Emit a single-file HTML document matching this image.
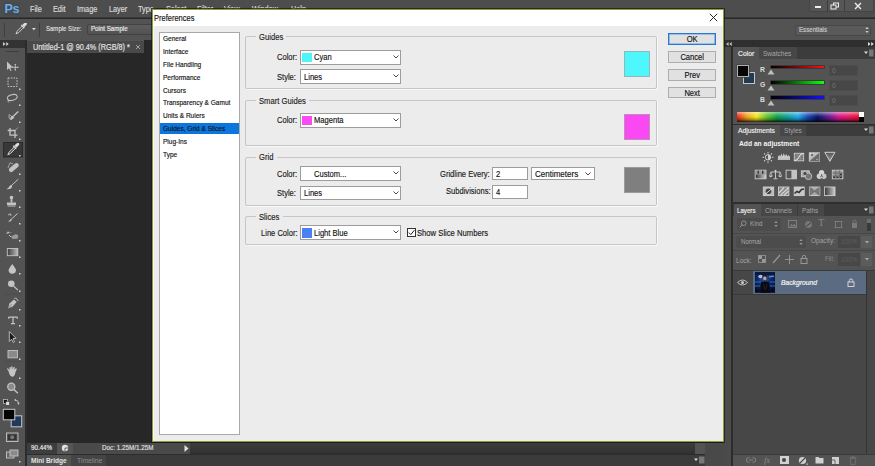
<!DOCTYPE html>
<html><head><meta charset="utf-8">
<style>
*{margin:0;padding:0;box-sizing:border-box}
html,body{width:875px;height:466px;overflow:hidden;background:#272727;font-family:"Liberation Sans",sans-serif;position:relative}
.a{position:absolute}
.t{position:absolute;white-space:nowrap;line-height:1}
.dlg .t{-webkit-text-stroke:0.15px currentColor}

.li{left:163px;font-size:6.7px;letter-spacing:-0.25px;color:#222}
.grp{position:absolute;left:245px;width:412px;border:1px solid #c4c4c4;border-radius:1px}
.gl{left:255px;background:#ececec;padding-left:3px;font-size:8px;letter-spacing:-0.15px;color:#222}
.lab{font-size:8px;letter-spacing:-0.2px;color:#222}
.dd{position:absolute;left:300px;width:101px;height:14px;background:#fff;border:1px solid #a5a5a5}
.fld{position:absolute;background:#fff;border:1px solid #a5a5a5}
.sw{position:absolute;left:1.5px;top:2px;width:10px;height:9px}
.ddt{position:absolute;top:2.5px;font-size:8px;letter-spacing:-0.2px;color:#111;white-space:nowrap;line-height:1}
.chev{position:absolute;left:90px;top:3px;width:5px;height:5px;border-right:1px solid #444;border-bottom:1px solid #444;transform:rotate(45deg) scale(0.8)}
.btn{position:absolute;left:668px;width:48px;height:12px;background:#e1e1e1;border:1px solid #adadad;font-size:8px;letter-spacing:-0.1px;color:#111;text-align:center;line-height:10px}

.mn{-webkit-text-stroke:0.15px currentColor;top:4.6px;font-size:8.4px;transform:scaleX(0.87);transform-origin:0 0;color:#dedede}
.ch{font-size:6.5px}
</style></head><body>
<!-- menu bar -->
<div class="a" style="left:0;top:0;width:875px;height:18px;background:#4d4d4d;border-bottom:1px solid #3a3a3a"></div>
<div class="a" style="left:3.5px;top:2px;width:16px;height:13.5px;background:#474a4e;border-radius:1px"></div><div class="t" style="left:4.5px;top:3px;font-size:12.5px;font-weight:bold;color:#6aace6;letter-spacing:-0.3px">Ps</div>
<div class="t mn" style="left:30px">File</div>
<div class="t mn" style="left:53px">Edit</div>
<div class="t mn" style="left:77px">Image</div>
<div class="t mn" style="left:109px">Layer</div>
<div class="t mn" style="left:138px">Type</div>
<div class="t mn" style="left:165.5px">Select</div>
<div class="t mn" style="left:196.5px">Filter</div>
<div class="t mn" style="left:224px">View</div>
<div class="t mn" style="left:251.5px">Window</div>
<div class="t mn" style="left:291px">Help</div>
<!-- window buttons -->
<div class="a" style="left:809px;top:0;width:65px;height:11.5px;background:#565656;border:1px solid #444;border-top:none"></div>
<div class="a" style="left:826.5px;top:0;width:1px;height:11px;background:#3e3e3e"></div>
<div class="a" style="left:843.5px;top:0;width:1px;height:11px;background:#3e3e3e"></div>
<div class="a" style="left:814.5px;top:6px;width:6px;height:2px;background:#eee"></div>
<svg class="a" style="left:830px;top:2px" width="10" height="8"><rect x="3.5" y="1" width="5" height="4" fill="none" stroke="#eee" stroke-width="1"/><rect x="1" y="3" width="5" height="4" fill="#565656" stroke="#eee" stroke-width="1"/></svg>
<svg class="a" style="left:854px;top:2px" width="8" height="8"><path d="M1 1 L7 7 M7 1 L1 7" stroke="#eee" stroke-width="1.4"/></svg>
<!-- options bar -->
<div class="a" style="left:0;top:19px;width:875px;height:21px;background:#535353"></div>
<div class="a" style="left:3.5px;top:23px;width:1px;height:14px;background:#3e3e3e"></div>
<div class="a" style="left:38.8px;top:22.7px;width:1px;height:14px;background:#3e3e3e"></div>
<svg class="a" style="left:15px;top:23px" width="12" height="12"><path d="M1 10.8 L2.2 8.2 L7.2 3.2 L8.6 4.6 L3.6 9.6 Z" fill="#4a4a4a" stroke="#e0e0e0" stroke-width="0.9"/><path d="M7.4 1.8 L9.6 -0.2 Q10.9 -0.9 11.6 -0.1 Q12.3 0.7 11.4 2 L9.3 4.1 Z" fill="#e0e0e0"/><path d="M6.3 2 L9.3 5" stroke="#e0e0e0" stroke-width="1.3"/></svg>
<svg class="a" style="left:31.6px;top:28.2px" width="4" height="3"><path d="M0 0 L3.8 0 L1.9 2.2 Z" fill="#ddd"/></svg>
<div class="t" style="left:45.8px;top:24.72px;font-size:7.3px;font-weight:normal;font-style:normal;color:#dedede;transform:scaleX(0.826);transform-origin:0 0;-webkit-text-stroke:0.2px currentColor">Sample Size:</div>
<div class="a" style="left:87px;top:23.5px;width:80px;height:11.5px;background:linear-gradient(#5d5d5d,#525252);border:1px solid #424242;border-radius:2px"></div>
<div class="t" style="left:91.4px;top:24.82px;font-size:7.3px;font-weight:normal;font-style:normal;color:#e8e8e8;transform:scaleX(0.843);transform-origin:0 0;-webkit-text-stroke:0.2px currentColor">Point Sample</div>
<div class="a" style="left:795px;top:24.5px;width:76px;height:11px;background:#5a5a5a;border:1px solid #474747;border-radius:2px"></div>
<div class="t" style="left:799px;top:25.82px;font-size:7.3px;font-weight:normal;font-style:normal;color:#c6c6c6;transform:scaleX(0.842);transform-origin:0 0;-webkit-text-stroke:0.2px currentColor">Essentials</div>
<svg class="a" style="left:865px;top:26px" width="4" height="8"><path d="M0.3 3 L2 1 L3.7 3 Z M0.3 5 L2 7 L3.7 5 Z" fill="#ccc"/></svg>
<!-- tools panel -->
<div class="a" style="left:0;top:40px;width:25px;height:426px;background:#535353"></div>
<div class="a" style="left:0;top:40px;width:25px;height:7.5px;background:#333"></div>
<svg class="a" style="left:3px;top:42px" width="7" height="4"><path d="M0 0 L2.6 2 L0 4 Z M3.2 0 L5.8 2 L3.2 4 Z" fill="#ccc"/></svg>
<div class="a" style="left:6px;top:50.5px;width:13px;height:1.5px;background:#3e3e3e"></div>
<div class="a" style="left:25px;top:40px;width:2px;height:426px;background:#2c2c2c"></div>
<!-- tool icons -->
<svg class="a" style="left:0;top:48px" width="25" height="418">
<g transform="translate(0,-48)">
<!-- move -->
<path d="M7 61.5 L7 70 L9 68.3 L10.5 71 L11.5 70.5 L10.3 67.8 L13 67.5 Z" fill="#c4c4c4"/>
<path d="M15.3 64.3 V70.3 M12.3 67.3 H18.3" stroke="#c4c4c4" stroke-width="0.9"/><path d="M15.3 63.8 L14.3 65 H16.3 Z M15.3 70.8 L14.3 69.6 H16.3 Z M11.8 67.3 L13 66.3 V68.3 Z M18.8 67.3 L17.6 66.3 V68.3 Z" fill="#c4c4c4"/>
<!-- marquee -->
<rect x="8" y="78" width="9" height="8.5" fill="none" stroke="#c4c4c4" stroke-width="1" stroke-dasharray="1.6 1.2"/>
<!-- lasso -->
<ellipse cx="12.3" cy="97.5" rx="5" ry="2.8" fill="none" stroke="#c4c4c4" stroke-width="1" transform="rotate(-15 12.3 97.5)"/>
<path d="M8.5 99.5 Q7.5 102 9 102.5" fill="none" stroke="#c4c4c4" stroke-width="0.9"/>
<!-- quick select -->
<path d="M9 114.5 Q8 119 11 120 L13 117.5 Z" fill="none" stroke="#c4c4c4" stroke-width="0.7"/>
<path d="M10 119.5 Q13 120 14.5 117 L12.3 115.5 Q10 117 10 119.5 Z" fill="#c4c4c4"/>
<path d="M13.5 116 L18.3 111.5" stroke="#c4c4c4" stroke-width="1.4"/>
<!-- crop -->
<path d="M10 128 V135.2 H17.5 M7.7 130.5 H15 V138" fill="none" stroke="#c4c4c4" stroke-width="1.3"/>
<path d="M15 130.5 L18 127.5" stroke="#c4c4c4" stroke-width="0.7"/>
<!-- selected eyedropper box -->
<rect x="3.5" y="142.5" width="19" height="14.5" fill="#383838" stroke="#2a2a2a" stroke-width="1"/>
<path d="M7.8 154.8 L9 152.2 L14.2 147 L15.6 148.4 L10.4 153.6 Z" fill="#5a5a5a" stroke="#dcdcdc" stroke-width="0.9"/>
<path d="M14.3 145.6 L16.8 143.2 Q18.2 142.3 19 143.2 Q19.7 144 18.8 145.3 L16.4 147.7 Z" fill="#dcdcdc"/>
<path d="M13.2 145.8 L16.2 148.8" stroke="#dcdcdc" stroke-width="1.3"/>
<!-- healing -->
<rect x="8" y="165.5" width="11.5" height="4.5" rx="2.2" fill="#c4c4c4" transform="rotate(-40 13.5 167.5)"/>
<path d="M8 168 L10 162.8 L13 164" fill="none" stroke="#c4c4c4" stroke-width="0.7"/>
<!-- brush -->
<path d="M12 185 L18.3 179.2" stroke="#c4c4c4" stroke-width="1"/>
<path d="M6.3 189.3 Q9 189.5 11 188.5 Q12.5 187 12 185 Q10.5 184.5 9.5 186.3 Q8.5 188.5 6.3 189.3 Z" fill="#c4c4c4"/>
<!-- stamp -->
<circle cx="11.5" cy="197.5" r="1.8" fill="#c4c4c4"/>
<rect x="10.6" y="198.5" width="1.8" height="4" fill="#c4c4c4"/>
<rect x="7" y="202.5" width="9" height="2.5" fill="#c4c4c4"/>
<rect x="7.5" y="205.5" width="8" height="1" fill="#c4c4c4"/>
<!-- history brush -->
<path d="M10.5 220 L17.5 213.5" stroke="#c4c4c4" stroke-width="1"/>
<path d="M8 222 L11.5 221 L11 218.7 Z" fill="#c4c4c4"/>
<path d="M8 215 L10.5 213.8 L11 216" fill="none" stroke="#c4c4c4" stroke-width="0.9"/>
<!-- eraser -->
<path d="M6 234 L8 231.2 L10 233.2 L12.3 232 Z" fill="#c4c4c4"/>
<path d="M11 236.5 L16 234 L18.5 235.8 L17.5 238.8 L12.5 239 Z" fill="#9a9a9a"/>
<path d="M9 235 L11 237" stroke="#c4c4c4" stroke-width="1"/>
<!-- gradient -->
<defs><linearGradient id="gr" x1="0" x2="1"><stop offset="0" stop-color="#3a3a3a"/><stop offset="1" stop-color="#bdbdbd"/></linearGradient></defs>
<rect x="7.3" y="248.5" width="10.5" height="7.2" fill="url(#gr)" stroke="#c4c4c4" stroke-width="0.9"/>
<!-- blur drop -->
<path d="M12.3 264 Q8.5 269 8.6 270 A3.7 3.7 0 0 0 16 270 Q16 269 12.3 264 Z" fill="#c4c4c4"/>
<!-- dodge -->
<circle cx="11.3" cy="283.7" r="3.3" fill="#c4c4c4"/>
<path d="M13.5 286 L17.8 290" stroke="#c4c4c4" stroke-width="1.1"/>
<path d="M4 294.3 H22" stroke="#4a4a4a" stroke-width="0.6"/>
<!-- pen -->
<path d="M8 308.5 L9.5 303.5 L14 299.5 L16.5 302 L12.8 306.5 Z" fill="#c4c4c4"/>
<path d="M14.5 298.8 L15.5 297.8 L18 300.3 L17 301.3" fill="none" stroke="#c4c4c4" stroke-width="1"/>
<path d="M8.3 308.2 L12 304.3" stroke="#555" stroke-width="0.6"/>
<!-- type -->
<path d="M8.5 317.2 H17.5 M13 317.2 V323.6 M11 323.6 H15 M8.7 317 V318.8 M17.3 317 V318.8" stroke="#c4c4c4" stroke-width="1.2" fill="none"/>
<!-- path select -->
<path d="M9.3 331.5 L9.3 341.5 L11.5 339.2 L13.2 342.5 L14.5 341.8 L13 338.6 L16 338.3 Z" fill="#1a1a1a" stroke="#c4c4c4" stroke-width="0.9"/>
<!-- rect shape -->
<rect x="8" y="350.5" width="9.5" height="7.3" fill="#8a8a8a" stroke="#c4c4c4" stroke-width="0.9"/>
<path d="M4 361.5 H22" stroke="#4a4a4a" stroke-width="0.6"/>
<!-- hand -->
<path d="M8.5 371 L7 369 Q7.2 368 8.2 368.5 L9.5 370.2 L9.5 367.3 Q10 366.5 10.7 367.3 L11 369.5 L11.2 366.5 Q11.9 365.8 12.5 366.5 L12.7 369.5 L13.5 367 Q14.2 366.4 14.7 367.1 L14.5 370 L15.7 368.3 Q16.6 368 16.8 368.9 L15.4 372.5 Q14.8 376.5 12.3 376.8 Q9.6 376.6 8.5 371 Z" fill="#c4c4c4"/>
<!-- zoom -->
<circle cx="11.3" cy="386.8" r="3.6" fill="#8a8a8a" stroke="#c4c4c4" stroke-width="1.2"/>
<path d="M14 389.5 L17.8 393.3" stroke="#c4c4c4" stroke-width="1.4"/>
<!-- default colors -->
<rect x="3.5" y="399.5" width="4" height="4" fill="#111" stroke="#ccc" stroke-width="0.7"/>
<rect x="5.8" y="401.5" width="3.8" height="3.8" fill="#ddd" stroke="#222" stroke-width="0.5"/>
<path d="M15 400 Q18.5 400 18.5 403.5" fill="none" stroke="#c4c4c4" stroke-width="0.9"/>
<path d="M14 400 L16 398.8 L16 401.2 Z M17.3 402.8 L19.7 402.8 L18.5 405 Z" fill="#c4c4c4"/>
<!-- swatches -->
<rect x="11.2" y="415.8" width="10.5" height="11" fill="#223a5a" stroke="#c8c8c8" stroke-width="1"/>
<rect x="3.3" y="409.3" width="11.5" height="10.5" fill="#050505" stroke="#c8c8c8" stroke-width="1"/>
<!-- quick mask -->
<rect x="6.5" y="433" width="11.5" height="8.5" fill="#555" stroke="#c4c4c4" stroke-width="0.9"/>
<rect x="8" y="434.5" width="8.5" height="5.5" fill="#333"/>
<circle cx="12.2" cy="437.2" r="2" fill="#777"/>
<!-- screen mode -->
<rect x="6.5" y="452" width="7.5" height="6" fill="#666" stroke="#c4c4c4" stroke-width="0.9"/>
<rect x="10" y="450" width="8" height="6" fill="#8a8a8a" stroke="#c4c4c4" stroke-width="0.9"/>
</g>
<g fill="#d8d8d8" transform="translate(0,-48)">
<rect x="19" y="88.5" width="1.5" height="1.5"/>
<rect x="19" y="104.5" width="1.5" height="1.5"/>
<rect x="19" y="121.5" width="1.5" height="1.5"/>
<rect x="19" y="138.5" width="1.5" height="1.5"/>
<rect x="19" y="155" width="1.5" height="1.5"/>
<rect x="19" y="173.5" width="1.5" height="1.5"/>
<rect x="19" y="190" width="1.5" height="1.5"/>
<rect x="19" y="206.5" width="1.5" height="1.5"/>
<rect x="19" y="223" width="1.5" height="1.5"/>
<rect x="19" y="240" width="1.5" height="1.5"/>
<rect x="19" y="256.5" width="1.5" height="1.5"/>
<rect x="19" y="273" width="1.5" height="1.5"/>
<rect x="19" y="290.5" width="1.5" height="1.5"/>
<rect x="19" y="309" width="1.5" height="1.5"/>
<rect x="19" y="325" width="1.5" height="1.5"/>
<rect x="19" y="341.5" width="1.5" height="1.5"/>
<rect x="19" y="358.5" width="1.5" height="1.5"/>
<rect x="19" y="377.5" width="1.5" height="1.5"/>
<rect x="19" y="461" width="1.5" height="1.5"/>
</g>
</svg>
<!-- doc tab -->
<div class="a" style="left:27px;top:40.3px;width:117px;height:12.7px;background:#494949;border-top:1px solid #555"></div>
<div class="t" style="left:32.7px;top:42.62px;font-size:8.6px;font-weight:normal;color:#e0e0e0;transform:scaleX(0.848);transform-origin:0 0;-webkit-text-stroke:0.2px currentColor">Untitled-1 @ 90.4% (RGB/8) *</div>
<svg class="a" style="left:135px;top:44px" width="6" height="6"><path d="M1 1 L5 5 M5 1 L1 5" stroke="#aaa" stroke-width="0.9"/></svg>
<!-- status bar -->
<div class="a" style="left:27px;top:442.5px;width:706px;height:11px;background:#2f2f2f"></div>
<div class="a" style="left:27px;top:442.5px;width:162.5px;height:11px;background:#4a4a4a"></div>
<div class="a" style="left:27px;top:442.5px;width:29.5px;height:11px;background:#3d3d3d"></div>
<div class="t" style="left:30.6px;top:444.31px;font-size:7.2px;font-weight:normal;font-style:normal;color:#e2e2e2;transform:scaleX(0.865);transform-origin:0 0;-webkit-text-stroke:0.2px currentColor">90.44%</div>
<div class="a" style="left:56.5px;top:442.5px;width:16px;height:11px;background:#555"></div>
<svg class="a" style="left:60.5px;top:444px" width="8" height="8"><circle cx="4" cy="4" r="3.2" fill="#e0e0e0"/><path d="M4 4 L7.2 4 M4 4 L4 7.2" stroke="#555" stroke-width="0.9"/></svg>
<div class="t" style="left:101.5px;top:444.31px;font-size:7.2px;font-weight:normal;font-style:normal;color:#dedede;transform:scaleX(0.877);transform-origin:0 0;-webkit-text-stroke:0.2px currentColor">Doc: 1.25M/1.25M</div>
<svg class="a" style="left:183.5px;top:444.5px" width="5" height="7"><path d="M0.5 0 L4.5 3.5 L0.5 7 Z" fill="#e0e0e0"/></svg>
<div class="a" style="left:189.5px;top:443px;width:505px;height:10px;background:linear-gradient(180deg,#3c3c3c,#333)"></div>
<div class="a" style="left:694.5px;top:442.5px;width:10.5px;height:11px;background:#535353"></div>
<div class="a" style="left:705px;top:442.5px;width:28px;height:23.5px;background:#494949"></div>
<!-- bottom panel tabs -->
<div class="a" style="left:27px;top:453.5px;width:678px;height:12.5px;background:#3b3b3b;border-top:1px solid #2c2c2c"></div>
<div class="a" style="left:27px;top:454.5px;width:44px;height:11.5px;background:#535353"></div>
<div class="a" style="left:71px;top:454.5px;width:35px;height:11.5px;background:#454545"></div>
<div class="t" style="left:31.1px;top:457.11px;font-size:7.2px;font-weight:bold;font-style:normal;color:#e4e4e4;transform:scaleX(0.910);transform-origin:0 0">Mini Bridge</div>
<div class="t" style="left:76.6px;top:457.11px;font-size:7.2px;font-weight:normal;font-style:normal;color:#8c8c8c;transform:scaleX(0.944);transform-origin:0 0">Timeline</div>
<svg class="a" style="left:694px;top:456px" width="11" height="8"><path d="M0 2.5 L4 2.5 L2 5 Z" fill="#ddd"/><rect x="5" y="0.5" width="5.5" height="7" fill="#777"/></svg>
<!-- right panel column -->
<div class="a" style="left:724px;top:40px;width:151px;height:7px;background:#2f2f2f"></div>
<svg class="a" style="left:726.3px;top:42px" width="6" height="4"><path d="M2.6 0 L0 2 L2.6 4 Z M5.8 0 L3.2 2 L5.8 4 Z" fill="#bbb"/></svg>
<svg class="a" style="left:867.5px;top:42px" width="6" height="4"><path d="M0 0 L2.6 2 L0 4 Z M3.2 0 L5.8 2 L3.2 4 Z" fill="#ddd"/></svg>
<div class="a" style="left:724px;top:47px;width:7px;height:419px;background:#4b4b4b"></div>
<div class="a" style="left:731px;top:47px;width:2px;height:419px;background:#2c2c2c"></div>
<div class="a" style="left:733px;top:47px;width:142px;height:419px;background:#535353"></div>
<!-- color panel -->
<div class="a" style="left:733px;top:47px;width:142px;height:12px;background:#3c3c3c"></div>
<div class="a" style="left:733px;top:47px;width:25.5px;height:12px;background:#535353"></div>
<div class="a" style="left:758.5px;top:47px;width:38px;height:12px;background:#474747"></div>
<div class="t" style="left:737.5px;top:49.81px;font-size:7.2px;font-weight:normal;font-style:normal;color:#eaeaea;transform:scaleX(0.943);transform-origin:0 0;-webkit-text-stroke:0.2px currentColor">Color</div>
<div class="t" style="left:762.7px;top:49.81px;font-size:7.2px;font-weight:normal;font-style:normal;color:#a6a6a6;transform:scaleX(0.908);transform-origin:0 0">Swatches</div>
<svg class="a" style="left:864px;top:49px" width="10" height="8"><path d="M0 2.5 L4 2.5 L2 5 Z" fill="#ddd"/><rect x="5" y="0.5" width="4.5" height="7" fill="#777"/></svg>
<div class="a" style="left:743px;top:72px;width:12px;height:11.5px;background:#233a55;border:1px solid #c4c4c4"></div>
<div class="a" style="left:737px;top:65.4px;width:11.8px;height:11.6px;background:#060606;border:1px solid #b0b0b0;box-shadow:0 0 0 0.8px #444"></div>
<div class="t ch" style="left:760px;top:66.5px;font-weight:bold;color:#ddd;font-size:6.8px">R</div>
<div class="t ch" style="left:760px;top:81.5px;font-weight:bold;color:#ddd;font-size:6.8px">G</div>
<div class="t ch" style="left:760px;top:96.5px;font-weight:bold;color:#ddd;font-size:6.8px">B</div>
<div class="a" style="left:770.8px;top:65.6px;width:53.7px;height:2.8px;background:linear-gradient(90deg,#000,#ff1010);box-shadow:0 0 0 0.6px #2a2a2a"></div>
<div class="a" style="left:770.8px;top:81.1px;width:53.7px;height:2.8px;background:linear-gradient(90deg,#000,#10ff10);box-shadow:0 0 0 0.6px #2a2a2a"></div>
<div class="a" style="left:770.8px;top:96.1px;width:53.7px;height:2.8px;background:linear-gradient(90deg,#000,#1010ff);box-shadow:0 0 0 0.6px #2a2a2a"></div>
<svg class="a" style="left:767px;top:69px" width="8" height="6"><path d="M4 0.5 L7.5 5.5 L0.5 5.5 Z" fill="#bdbdbd"/></svg>
<svg class="a" style="left:767px;top:84.5px" width="8" height="6"><path d="M4 0.5 L7.5 5.5 L0.5 5.5 Z" fill="#bdbdbd"/></svg>
<svg class="a" style="left:767px;top:99.5px" width="8" height="6"><path d="M4 0.5 L7.5 5.5 L0.5 5.5 Z" fill="#bdbdbd"/></svg>
<div class="a" style="left:829px;top:64.5px;width:29px;height:11px;background:#474747;border:1px solid #4c4c4c"></div>
<div class="a" style="left:829px;top:80px;width:29px;height:11px;background:#474747;border:1px solid #4c4c4c"></div>
<div class="a" style="left:829px;top:95px;width:29px;height:11px;background:#474747;border:1px solid #4c4c4c"></div>
<div class="t ch" style="left:832px;top:67.5px;color:#777">0</div>
<div class="t ch" style="left:832px;top:83px;color:#777">0</div>
<div class="t ch" style="left:832px;top:98px;color:#777">0</div>
<div class="a" style="left:736.5px;top:112px;width:122px;height:10px;background:linear-gradient(180deg,rgba(255,255,255,0.5) 0%,rgba(255,255,255,0.1) 35%,rgba(0,0,0,0) 50%,rgba(0,0,0,0.3) 75%,rgba(0,0,0,0.85) 100%),linear-gradient(90deg,#f02818 0%,#f0a020 8%,#f2e824 16%,#60c030 25%,#10a048 33%,#10a0a0 42%,#20a8e8 50%,#1848b0 58%,#0c1468 66%,#602090 75%,#d01890 83%,#e81860 92%,#e81030 100%)"></div>
<div class="a" style="left:858.5px;top:112px;width:5.5px;height:5px;background:#fff"></div>
<div class="a" style="left:858.5px;top:117px;width:5.5px;height:5px;background:#000"></div>
<!-- adjustments panel -->
<div class="a" style="left:733px;top:123.5px;width:142px;height:1px;background:#2e2e2e"></div>
<div class="a" style="left:733px;top:124.5px;width:142px;height:11.5px;background:#3c3c3c"></div>
<div class="a" style="left:733px;top:124.5px;width:47px;height:11.5px;background:#535353"></div>
<div class="a" style="left:780px;top:124.5px;width:26px;height:11.5px;background:#474747"></div>
<div class="t" style="left:737.8px;top:126.71px;font-size:7.2px;font-weight:normal;font-style:normal;color:#eaeaea;transform:scaleX(0.935);transform-origin:0 0;-webkit-text-stroke:0.2px currentColor">Adjustments</div>
<div class="t" style="left:783.9px;top:126.71px;font-size:7.2px;font-weight:normal;font-style:normal;color:#a6a6a6;transform:scaleX(0.914);transform-origin:0 0">Styles</div>
<svg class="a" style="left:864px;top:126px" width="10" height="8"><path d="M0 2.5 L4 2.5 L2 5 Z" fill="#ddd"/><rect x="5" y="0.5" width="4.5" height="7" fill="#777"/></svg>
<div class="t" style="left:738.7px;top:139.71px;font-size:7.2px;font-weight:bold;font-style:normal;color:#f4f4f4;transform:scaleX(0.932);transform-origin:0 0">Add an adjustment</div>
<svg class="a" style="left:750px;top:148px" width="100" height="52">
<defs>
<linearGradient id="g1" x1="0" y1="0" x2="1" y2="1"><stop offset="0" stop-color="#e6e6e6"/><stop offset="1" stop-color="#7a7a7a"/></linearGradient>
<linearGradient id="g2" x1="0" x2="1"><stop offset="0" stop-color="#333"/><stop offset="1" stop-color="#cfcfcf"/></linearGradient>
<linearGradient id="g3" x1="0" y1="0" x2="0" y2="1"><stop offset="0" stop-color="#555"/><stop offset="1" stop-color="#999"/></linearGradient>
</defs>
<g transform="translate(-750,-148)">
<!-- sun -->
<circle cx="768" cy="157.3" r="2.7" fill="#555" stroke="#cfcfcf" stroke-width="1"/>
<path d="M768 154.6 A2.7 2.7 0 0 1 768 160 Z" fill="#cfcfcf"/>
<g stroke="#cfcfcf" stroke-width="1.1" stroke-linecap="round">
<path d="M768 152.2 V152.9 M768 161.7 V162.4 M762.9 157.3 H763.6 M772.4 157.3 H773.1 M764.4 153.7 L764.8 154.1 M771.2 160.5 L771.6 160.9 M771.6 153.7 L771.2 154.1 M764.8 160.5 L764.4 160.9"/>
</g>
<!-- levels -->
<path d="M778 158.5 L778 156.5 L779.3 155 L780.2 156.8 L781.3 153.5 L782.5 156.3 L783.8 153.3 L785 156 L786.3 154 L787.5 156.5 L788.8 155 L790 157 L790 158.5 Z" fill="#c8c8c8"/>
<rect x="777.8" y="158.3" width="12.2" height="1.5" fill="#d8d8d8"/>
<!-- curves -->
<rect x="794.3" y="153.3" width="9.4" height="7.5" fill="#777" stroke="#cfcfcf" stroke-width="0.9"/>
<path d="M797.4 153.3 V160.8 M800.6 153.3 V160.8 M794.3 155.8 H803.7 M794.3 158.3 H803.7" stroke="#9a9a9a" stroke-width="0.5"/>
<path d="M794.5 160.5 Q798 160.5 799 157 Q800 153.5 803.5 153.5" fill="none" stroke="#eee" stroke-width="1"/>
<!-- exposure -->
<rect x="809.3" y="152.8" width="10.2" height="8.4" fill="url(#g1)" stroke="#cfcfcf" stroke-width="0.9"/>
<path d="M809.3 161.2 L819.5 152.8 L819.5 161.2 Z" fill="#6a6a6a"/>
<path d="M810.8 155 H813.2 M812 153.8 V156.2 M815.8 159.3 H818.2" stroke="#333" stroke-width="0.7"/>
<path d="M816 159.3 H818.4" stroke="#ddd" stroke-width="0.7"/>
<!-- vibrance -->
<path d="M824.8 152.3 H835 L829.9 161.3 Z" fill="url(#g3)" stroke="#cfcfcf" stroke-width="1"/>
<!-- row2 -->
<rect x="755.2" y="170.2" width="10.8" height="8.6" fill="url(#g2)" stroke="#cfcfcf" stroke-width="0.9"/>
<rect x="755.6" y="170.6" width="10" height="4" fill="#999"/>
<rect x="757.6" y="170.8" width="1.3" height="3" fill="#333"/><rect x="762" y="170.8" width="1.3" height="3" fill="#333"/>
<path d="M775.5 170 V178.5 M770.8 172 H780.2 M773.5 178.8 H777.5" stroke="#cfcfcf" stroke-width="0.9"/>
<path d="M770.8 172 L769.6 176 M770.8 172 L772 176 M780.2 172 L779 176 M780.2 172 L781.4 176" stroke="#cfcfcf" stroke-width="0.7"/>
<path d="M769.4 176 Q770.8 178 772.2 176 Z M778.8 176 Q780.2 178 781.6 176 Z" fill="#cfcfcf" stroke="#cfcfcf" stroke-width="0.6"/>
<circle cx="775.5" cy="170.8" r="1" fill="#cfcfcf"/>
<rect x="786.1" y="170.2" width="10.3" height="8.6" fill="#c4c4c4" stroke="#cfcfcf" stroke-width="0.9"/>
<rect x="786.6" y="170.7" width="4.8" height="7.6" fill="#555"/>
<rect x="801.3" y="170.8" width="8" height="6" fill="#aaa" stroke="#cfcfcf" stroke-width="0.8"/>
<circle cx="808.5" cy="176.3" r="3.3" fill="#777" stroke="#cfcfcf" stroke-width="0.8"/>
<circle cx="805" cy="173.5" r="1.6" fill="#444"/>
<circle cx="821.6" cy="172.6" r="2.6" fill="#d8d8d8"/>
<circle cx="819.4" cy="176.2" r="2.7" fill="#cfcfcf"/>
<circle cx="823.8" cy="176.2" r="2.7" fill="#c4c4c4"/>
<path d="M821.6 174 V176 M820 177.2 L821.6 176 L823.2 177.2" stroke="#444" stroke-width="0.7" fill="none"/>
<rect x="832.3" y="170.2" width="10.6" height="8.6" fill="#9a9a9a" stroke="#cfcfcf" stroke-width="0.9"/>
<path d="M835.8 170.2 V178.8 M839.3 170.2 V178.8 M832.3 173.1 H842.9 M832.3 176 H842.9" stroke="#555" stroke-width="0.6"/>
<g fill="#333"><rect x="836.5" y="176.6" width="2" height="1.6"/><rect x="840" y="176.6" width="2" height="1.6"/><rect x="833" y="176.6" width="2" height="1.6"/><rect x="840" y="173.7" width="2" height="1.6"/></g>
<!-- row3 -->
<rect x="763.3" y="187" width="10.4" height="8.6" fill="#bbb" stroke="#cfcfcf" stroke-width="0.9"/>
<circle cx="768.5" cy="191.3" r="2.8" fill="#444"/>
<path d="M765 194.5 L772.5 188" stroke="#eee" stroke-width="0.8"/>
<rect x="778.5" y="187" width="10.4" height="8.6" fill="#888" stroke="#cfcfcf" stroke-width="0.9"/>
<path d="M779 193 L784 187.5 M780.5 195.2 L788.5 187.8 M784 195.2 L788.5 191" stroke="#d8d8d8" stroke-width="1.2"/>
<rect x="794.2" y="187" width="10" height="8.6" fill="#c8c8c8" stroke="#cfcfcf" stroke-width="0.9"/>
<path d="M794.5 193.5 L797 191.5 L799 192.5 L801.5 189.5 L804 189" stroke="#333" stroke-width="1.6" fill="none"/>
<rect x="809.4" y="187" width="10.4" height="8.6" fill="#a8a8a8" stroke="#cfcfcf" stroke-width="0.9"/>
<path d="M809.6 187.2 L814.6 191.3 L819.6 187.2 M809.6 195.4 L814.6 191.3 L819.6 195.4" fill="none" stroke="#555" stroke-width="0.8"/>
<path d="M809.6 187.2 L814.6 191.3 L809.6 195.4 Z M819.6 187.2 L814.6 191.3 L819.6 195.4 Z" fill="#777"/>
<rect x="824.6" y="187" width="10.4" height="8.6" fill="url(#g2)" stroke="#cfcfcf" stroke-width="0.9"/>
</g></svg>
<!-- layers panel -->
<div class="a" style="left:733px;top:202px;width:142px;height:2px;background:#2e2e2e"></div>
<div class="a" style="left:733px;top:204px;width:142px;height:11.5px;background:#3c3c3c"></div>
<div class="a" style="left:734px;top:204px;width:27px;height:11.5px;background:#535353"></div>
<div class="a" style="left:761px;top:204px;width:36px;height:11.5px;background:#474747"></div>
<div class="a" style="left:797.5px;top:204px;width:26px;height:11.5px;background:#474747"></div>
<div class="t" style="left:737.4px;top:206.51px;font-size:7.2px;font-weight:normal;font-style:normal;color:#eaeaea;transform:scaleX(0.857);transform-origin:0 0;-webkit-text-stroke:0.2px currentColor">Layers</div>
<div class="t" style="left:765px;top:206.51px;font-size:7.2px;font-weight:normal;font-style:normal;color:#a6a6a6;transform:scaleX(0.886);transform-origin:0 0">Channels</div>
<div class="t" style="left:801.6px;top:206.51px;font-size:7.2px;font-weight:normal;font-style:normal;color:#a6a6a6;transform:scaleX(0.881);transform-origin:0 0">Paths</div>
<svg class="a" style="left:864px;top:206px" width="10" height="8"><path d="M0 2.5 L4 2.5 L2 5 Z" fill="#ddd"/><rect x="5" y="0.5" width="4.5" height="7" fill="#777"/></svg>
<div class="a" style="left:736.5px;top:217.5px;width:44px;height:13px;background:#4c4c4c;border-radius:2px"></div>
<svg class="a" style="left:739px;top:220px" width="8" height="8"><circle cx="4.8" cy="3.2" r="2.3" fill="none" stroke="#999" stroke-width="0.9"/><path d="M3.2 4.8 L0.8 7.2" stroke="#999" stroke-width="1"/></svg>
<div class="t" style="left:749.8px;top:219.91px;font-size:7.2px;font-weight:normal;font-style:normal;color:#a2a2a2;transform:scaleX(0.862);transform-origin:0 0">Kind</div>
<svg class="a" style="left:774px;top:220px" width="4" height="8"><path d="M0.3 3 L2 1 L3.7 3 Z M0.3 5 L2 7 L3.7 5 Z" fill="#999"/></svg>
<svg class="a" style="left:788px;top:219.5px" width="9" height="8"><rect x="0.5" y="0.5" width="8" height="7" fill="none" stroke="#7e7e7e" stroke-width="1"/><path d="M1.5 6.5 L3.5 4 L5 5.5 L6.5 3.5 L8 6.5 Z" fill="#7e7e7e"/></svg>
<svg class="a" style="left:803.5px;top:219.5px" width="9" height="9"><circle cx="4.5" cy="4.5" r="3.5" fill="#777"/><path d="M2 6.5 L7 2.5" stroke="#444" stroke-width="1"/></svg>
<div class="t" style="left:818px;top:218.3px;font-size:10.5px;font-family:'Liberation Serif',serif;color:#858585">T</div>
<svg class="a" style="left:833.5px;top:219.5px" width="9" height="9"><rect x="1.5" y="1.5" width="6" height="6" fill="none" stroke="#7a7a7a" stroke-width="1"/><path d="M0 1.5 H9 M0 7.5 H9" stroke="#7a7a7a" stroke-width="0.6"/></svg>
<svg class="a" style="left:849.5px;top:219px" width="9" height="10"><path d="M2 4 L7 4 L7 9 L2 9 Z" fill="#7a7a7a"/><path d="M3 4 V2.5 A1.5 1.5 0 0 1 6 2.5 V4" fill="none" stroke="#7a7a7a" stroke-width="0.9"/></svg>
<div class="a" style="left:867px;top:218.5px;width:4px;height:12px;background:#3a3a3a"></div>
<div class="a" style="left:867px;top:218.5px;width:4px;height:4px;background:#6c6c6c"></div>
<div class="a" style="left:733px;top:232.5px;width:142px;height:1px;background:#484848"></div>
<div class="a" style="left:736px;top:235.5px;width:70px;height:12.5px;background:#4c4c4c;border-radius:2px"></div>
<div class="t" style="left:740.8px;top:237.91px;font-size:7.2px;font-weight:normal;font-style:normal;color:#a6a6a6;transform:scaleX(0.872);transform-origin:0 0">Normal</div>
<svg class="a" style="left:799px;top:237.5px" width="4" height="8"><path d="M0.3 3 L2 1 L3.7 3 Z M0.3 5 L2 7 L3.7 5 Z" fill="#999"/></svg>
<div class="t" style="left:810.6px;top:237.31px;font-size:7.2px;font-weight:normal;font-style:normal;color:#a2a2a2;transform:scaleX(0.910);transform-origin:0 0">Opacity:</div>
<div class="a" style="left:838px;top:235.5px;width:22px;height:12.5px;background:#474747"></div>
<div class="t ch" style="left:841px;top:239px;color:#5e5e5e">100%</div>
<div class="a" style="left:861px;top:235.5px;width:11px;height:12.5px;background:#5c5c5c"></div>
<svg class="a" style="left:864.5px;top:240.5px" width="4" height="3"><path d="M0 0 H4 L2 2.5 Z" fill="#aaa"/></svg>
<div class="a" style="left:733px;top:250px;width:142px;height:1px;background:#484848"></div>
<div class="t" style="left:736.3px;top:256.51px;font-size:7.2px;font-weight:normal;font-style:normal;color:#a6a6a6;transform:scaleX(0.913);transform-origin:0 0">Lock:</div>
<svg class="a" style="left:758px;top:255px" width="8" height="8"><rect x="0.5" y="0.5" width="7" height="7" fill="none" stroke="#999" stroke-width="0.8"/><rect x="0.5" y="0.5" width="3.5" height="3.5" fill="#999"/><rect x="4" y="4" width="3.5" height="3.5" fill="#999"/></svg>
<svg class="a" style="left:771.5px;top:254px" width="9" height="10"><path d="M1 9 L8 1" stroke="#999" stroke-width="1.2"/></svg>
<svg class="a" style="left:785px;top:254.5px" width="9" height="9"><path d="M4.5 0 V9 M0 4.5 H9" stroke="#999" stroke-width="0.9"/></svg>
<svg class="a" style="left:800px;top:253.5px" width="8" height="10"><rect x="1" y="4.5" width="6" height="5" fill="none" stroke="#999" stroke-width="1"/><path d="M2.3 4.5 V3 A1.7 1.7 0 0 1 5.7 3 V4.5" fill="none" stroke="#999" stroke-width="0.9"/></svg>
<div class="t" style="left:825.2px;top:255.31px;font-size:7.2px;font-weight:normal;font-style:normal;color:#8a8a8a;transform:scaleX(0.849);transform-origin:0 0">Fill:</div>
<div class="a" style="left:838px;top:253px;width:22px;height:12.5px;background:#474747"></div>
<div class="t ch" style="left:841px;top:256.5px;color:#5e5e5e">100%</div>
<div class="a" style="left:861px;top:253px;width:11px;height:12.5px;background:#5c5c5c"></div>
<svg class="a" style="left:864.5px;top:258px" width="4" height="3"><path d="M0 0 H4 L2 2.5 Z" fill="#aaa"/></svg>
<div class="a" style="left:733px;top:269.5px;width:142px;height:1px;background:#3a3a3a"></div>
<div class="a" style="left:733px;top:270.5px;width:133px;height:184px;background:#474747"></div>
<div class="a" style="left:866px;top:270.5px;width:9px;height:184px;background:#474747;border-left:1.2px solid #343434"></div>
<div class="a" style="left:753px;top:270.5px;width:113px;height:23.5px;background:#5b6b82"></div>
<div class="a" style="left:733px;top:294px;width:133px;height:1px;background:#3a3a3a"></div>
<svg class="a" style="left:737px;top:279px" width="11" height="7"><path d="M0.5 3.5 Q5.5 -1.5 10.5 3.5 Q5.5 8.5 0.5 3.5 Z" fill="none" stroke="#ccc" stroke-width="0.9"/><circle cx="5.5" cy="3.5" r="1.5" fill="#ccc"/></svg>
<svg class="a" style="left:754.8px;top:271.9px" width="20.5" height="20.8" viewBox="0 0 20.5 20.8">
<defs><radialGradient id="tg" cx="0.45" cy="0.3" r="0.7"><stop offset="0" stop-color="#2a5aa8"/><stop offset="0.5" stop-color="#0c2a66"/><stop offset="1" stop-color="#040c24"/></radialGradient></defs>
<rect width="20.5" height="20.8" fill="url(#tg)"/>
<rect x="0" y="0" width="20.5" height="3" fill="#0a1a3a"/>
<ellipse cx="5.5" cy="4.5" rx="2.2" ry="1.8" fill="#c8e0ff" opacity="0.8"/>
<path d="M14 4 L19 3.5 L19 5 L14 5.5 Z" fill="#6aa8f0" opacity="0.8"/>
<path d="M0 10 H6 M0 14 H5 M15 10 H20.5 M15 14 H20.5" stroke="#3d7be0" stroke-width="1.2" opacity="0.8"/>
<rect x="7.5" y="2.5" width="4.5" height="5" rx="2" fill="#1a1a1a"/>
<rect x="8.2" y="4.5" width="3.2" height="3.5" rx="1" fill="#c8a090"/>
<path d="M5.5 20.8 L6 10.5 Q10 8.5 14 10.5 L15 20.8 Z" fill="#0a0a0e"/>
<path d="M8.5 12 L10 18 M12 12 L11 17" stroke="#333" stroke-width="0.6"/>
</svg>

<div class="t" style="left:781.3px;top:278.91px;font-size:7.2px;font-weight:normal;font-style:italic;color:#f2f2f2;transform:scaleX(0.938);transform-origin:0 0;-webkit-text-stroke:0.2px currentColor">Background</div>
<svg class="a" style="left:847px;top:277.5px" width="8" height="9"><rect x="1" y="4" width="6" height="4.5" fill="none" stroke="#ddd" stroke-width="0.9"/><path d="M2.3 4 V2.6 A1.7 1.7 0 0 1 5.7 2.6 V4" fill="none" stroke="#ddd" stroke-width="0.9"/></svg>
<div class="a" style="left:733px;top:454px;width:142px;height:12px;background:#535353;border-top:1px solid #3a3a3a"></div>
<svg class="a" style="left:745.5px;top:457px" width="10" height="6"><path d="M3.5 0.8 H2.5 A2.2 2.2 0 0 0 2.5 5.2 H3.5 M6.5 0.8 H7.5 A2.2 2.2 0 0 1 7.5 5.2 H6.5 M3 3 H7" fill="none" stroke="#8a8a8a" stroke-width="0.9"/></svg>
<div class="t" style="left:764px;top:455.5px;font-size:8.5px;font-style:italic;font-family:'Liberation Serif',serif;color:#8a8a8a">fx</div>
<div class="a" style="left:779.5px;top:456px;width:9.5px;height:7.5px;background:#d0d0d0"></div>
<div class="a" style="left:782.3px;top:457.8px;width:4px;height:4px;border-radius:50%;background:#444"></div>
<svg class="a" style="left:798px;top:455.5px" width="10" height="9"><circle cx="4.5" cy="4.5" r="3.6" fill="#d0d0d0"/><path d="M2 7 L7 2" stroke="#444" stroke-width="1.1"/><rect x="8.5" y="7.5" width="1.3" height="1.3" fill="#ccc"/></svg>
<svg class="a" style="left:814.5px;top:456px" width="9" height="8"><path d="M0.5 1 H3.5 L4.5 2 H8.5 V7.5 H0.5 Z" fill="#d0d0d0"/></svg>
<svg class="a" style="left:831px;top:455.5px" width="9" height="9"><rect x="1" y="1" width="7" height="7" fill="#d0d0d0"/><path d="M1 4 L4 4 L4 8" fill="none" stroke="#555" stroke-width="0.8"/></svg>
<svg class="a" style="left:849px;top:455.5px" width="8" height="9"><path d="M0.5 1.5 H7.5 M3 1.5 V0.5 H5 V1.5 M1.3 2.5 L1.8 8.5 H6.2 L6.7 2.5 Z" fill="none" stroke="#6e6e6e" stroke-width="0.9"/></svg>
<!-- dialog -->
<div class="dlg">
<div class="a" style="left:152px;top:9px;width:572px;height:433px;background:#8ba030;box-shadow:0 0 0 1px rgba(24,24,28,0.7)"></div>
<div class="a" style="left:153px;top:10px;width:570px;height:431px;background:#ececec;box-shadow:inset 1px 0 0 #f6f6fa"></div>
<div class="a" style="left:153px;top:10px;width:570px;height:16px;background:#ffffff"></div>
<div class="t" style="left:154.2px;top:13.14px;font-size:9.4px;color:#101010;transform:scaleX(0.80);transform-origin:0 0;">Preferences</div>
<svg class="a" style="left:709px;top:12.5px" width="9" height="9"><path d="M0.8 0.8 L8.2 8.2 M8.2 0.8 L0.8 8.2" stroke="#222" stroke-width="1"/></svg>
<div class="a" style="left:159px;top:32px;width:80.5px;height:403px;background:#fff;border:1px solid #a9a9a9"></div>
<div class="a" style="left:160px;top:123px;width:78.5px;height:11px;background:#0b77de"></div>
<div class="t" style="left:163.2px;top:35.34px;font-size:7.4px;color:#111;transform:scaleX(0.885);transform-origin:0 0;">General</div>
<div class="t" style="left:163.2px;top:48.14px;font-size:7.4px;color:#111;transform:scaleX(0.885);transform-origin:0 0;">Interface</div>
<div class="t" style="left:163.2px;top:60.94px;font-size:7.4px;color:#111;transform:scaleX(0.885);transform-origin:0 0;">File Handling</div>
<div class="t" style="left:163.2px;top:73.74px;font-size:7.4px;color:#111;transform:scaleX(0.885);transform-origin:0 0;">Performance</div>
<div class="t" style="left:163.2px;top:86.54px;font-size:7.4px;color:#111;transform:scaleX(0.885);transform-origin:0 0;">Cursors</div>
<div class="t" style="left:163.2px;top:99.34px;font-size:7.4px;color:#111;transform:scaleX(0.885);transform-origin:0 0;">Transparency &amp; Gamut</div>
<div class="t" style="left:163.2px;top:112.14px;font-size:7.4px;color:#111;transform:scaleX(0.885);transform-origin:0 0;">Units &amp; Rulers</div>
<div class="t" style="left:163.2px;top:124.94px;font-size:7.4px;color:#111;transform:scaleX(0.885);transform-origin:0 0;">Guides, Grid &amp; Slices</div>
<div class="t" style="left:163.2px;top:137.74px;font-size:7.4px;color:#111;transform:scaleX(0.885);transform-origin:0 0;">Plug-Ins</div>
<div class="t" style="left:163.2px;top:150.54px;font-size:7.4px;color:#111;transform:scaleX(0.885);transform-origin:0 0;">Type</div>
<div class="a" style="left:244.8px;top:36.3px;width:412.3px;height:53.0px;border:1px solid #c6c6c6;border-radius:2px;box-shadow:1px 1px 0 #f8f8f8"></div>
<div class="a" style="left:256px;top:35.8px;width:30.30000000000001px;height:3px;background:#ececec"></div>
<div class="t" style="left:258.80px;top:33.15px;font-size:8.8px;color:#1e1e1e;transform:scaleX(0.87);transform-origin:0 0;">Guides</div>
<div class="a" style="left:244.8px;top:100.1px;width:412.3px;height:46.400000000000006px;border:1px solid #c6c6c6;border-radius:2px;box-shadow:1px 1px 0 #f8f8f8"></div>
<div class="a" style="left:256px;top:99.6px;width:53px;height:3px;background:#ececec"></div>
<div class="t" style="left:258.80px;top:96.95px;font-size:8.8px;color:#1e1e1e;transform:scaleX(0.87);transform-origin:0 0;">Smart Guides</div>
<div class="a" style="left:244.8px;top:156.5px;width:412.3px;height:49px;border:1px solid #c6c6c6;border-radius:2px;box-shadow:1px 1px 0 #f8f8f8"></div>
<div class="a" style="left:256px;top:156px;width:21px;height:3px;background:#ececec"></div>
<div class="t" style="left:258.80px;top:153.35px;font-size:8.8px;color:#1e1e1e;transform:scaleX(0.87);transform-origin:0 0;">Grid</div>
<div class="a" style="left:244.8px;top:216.2px;width:412.3px;height:28.700000000000017px;border:1px solid #c6c6c6;border-radius:2px;box-shadow:1px 1px 0 #f8f8f8"></div>
<div class="a" style="left:256px;top:215.7px;width:27px;height:3px;background:#ececec"></div>
<div class="t" style="left:258.80px;top:213.05px;font-size:8.8px;color:#1e1e1e;transform:scaleX(0.87);transform-origin:0 0;">Slices</div>
<div class="t" style="left:277.00px;top:53.15px;font-size:8.8px;color:#1a1a1a;transform:scaleX(0.86);transform-origin:0 0;">Color:</div>
<div class="a" style="left:299.6px;top:49.8px;width:101.8px;height:14.8px;background:#fff;border:1px solid #9c9c9c"></div>
<div class="a" style="left:301.7px;top:52.599999999999994px;width:10.2px;height:9.4px;background:#4df5fb"></div>
<div class="t" style="left:313.50px;top:53.15px;font-size:8.8px;color:#111;transform:scaleX(0.86);transform-origin:0 0;">Cyan</div>
<svg class="a" style="left:393px;top:54.8px" width="6" height="4"><path d="M0.5 0.5 L3 3 L5.5 0.5" fill="none" stroke="#333" stroke-width="0.9"/></svg>
<div class="t" style="left:277.00px;top:72.55px;font-size:8.8px;color:#1a1a1a;transform:scaleX(0.86);transform-origin:0 0;">Style:</div>
<div class="a" style="left:299.6px;top:69.3px;width:101.8px;height:14.8px;background:#fff;border:1px solid #9c9c9c"></div>
<div class="t" style="left:304.00px;top:72.65px;font-size:8.8px;color:#111;transform:scaleX(0.86);transform-origin:0 0;">Lines</div>
<svg class="a" style="left:393px;top:74.3px" width="6" height="4"><path d="M0.5 0.5 L3 3 L5.5 0.5" fill="none" stroke="#333" stroke-width="0.9"/></svg>
<div class="a" style="left:624px;top:51px;width:26px;height:25.7px;background:#4df7fc;border:1px solid #8fb9bb"></div>
<div class="t" style="left:277.00px;top:116.35px;font-size:8.8px;color:#1a1a1a;transform:scaleX(0.86);transform-origin:0 0;">Color:</div>
<div class="a" style="left:299.6px;top:113px;width:101.8px;height:14.8px;background:#fff;border:1px solid #9c9c9c"></div>
<div class="a" style="left:301.7px;top:115.8px;width:10.2px;height:9.4px;background:#f94af3"></div>
<div class="t" style="left:313.50px;top:116.35px;font-size:8.8px;color:#111;transform:scaleX(0.86);transform-origin:0 0;">Magenta</div>
<svg class="a" style="left:393px;top:118px" width="6" height="4"><path d="M0.5 0.5 L3 3 L5.5 0.5" fill="none" stroke="#333" stroke-width="0.9"/></svg>
<div class="a" style="left:624px;top:113.5px;width:26px;height:26.2px;background:#fa49f3;border:1px solid #bb8fba"></div>
<div class="t" style="left:277.00px;top:169.85px;font-size:8.8px;color:#1a1a1a;transform:scaleX(0.86);transform-origin:0 0;">Color:</div>
<div class="a" style="left:299.6px;top:166.4px;width:101.8px;height:14.8px;background:#fff;border:1px solid #9c9c9c"></div>
<div class="t" style="left:313.50px;top:169.75px;font-size:8.8px;color:#111;transform:scaleX(0.86);transform-origin:0 0;">Custom...</div>
<svg class="a" style="left:393px;top:171.4px" width="6" height="4"><path d="M0.5 0.5 L3 3 L5.5 0.5" fill="none" stroke="#333" stroke-width="0.9"/></svg>
<div class="t" style="left:277.00px;top:189.15px;font-size:8.8px;color:#1a1a1a;transform:scaleX(0.86);transform-origin:0 0;">Style:</div>
<div class="a" style="left:299.6px;top:185.5px;width:101.8px;height:14.8px;background:#fff;border:1px solid #9c9c9c"></div>
<div class="t" style="left:304.00px;top:188.85px;font-size:8.8px;color:#111;transform:scaleX(0.86);transform-origin:0 0;">Lines</div>
<svg class="a" style="left:393px;top:190.5px" width="6" height="4"><path d="M0.5 0.5 L3 3 L5.5 0.5" fill="none" stroke="#333" stroke-width="0.9"/></svg>
<div class="t" style="left:440.00px;top:169.85px;font-size:8.8px;color:#1a1a1a;transform:scaleX(0.86);transform-origin:0 0;">Gridline Every:</div>
<div class="t" style="left:445.80px;top:187.45px;font-size:8.8px;color:#1a1a1a;transform:scaleX(0.86);transform-origin:0 0;">Subdivisions:</div>
<div class="a" style="left:492.4px;top:166.8px;width:35.6px;height:13.4px;background:#fff;border:1px solid #9c9c9c"></div>
<div class="t" style="left:495.50px;top:170.15px;font-size:8.8px;color:#111;transform:scaleX(0.86);transform-origin:0 0;">2</div>
<div class="a" style="left:492.4px;top:185.2px;width:35.6px;height:13.4px;background:#fff;border:1px solid #9c9c9c"></div>
<div class="t" style="left:495.50px;top:187.75px;font-size:8.8px;color:#111;transform:scaleX(0.86);transform-origin:0 0;">4</div>
<div class="a" style="left:530.5px;top:166.6px;width:64.5px;height:13.6px;background:#fff;border:1px solid #9c9c9c"></div>
<div class="t" style="left:534.70px;top:170.15px;font-size:8.8px;color:#111;transform:scaleX(0.91);transform-origin:0 0;">Centimeters</div>
<svg class="a" style="left:585px;top:171.5px" width="6" height="4"><path d="M0.5 0.5 L3 3 L5.5 0.5" fill="none" stroke="#333" stroke-width="0.9"/></svg>
<div class="a" style="left:624px;top:166.8px;width:25.7px;height:26.2px;background:#7f7f7f;border:1px solid #9a9a9a"></div>
<div class="t" style="left:261.00px;top:228.85px;font-size:8.8px;color:#1a1a1a;transform:scaleX(0.86);transform-origin:0 0;">Line Color:</div>
<div class="a" style="left:299.6px;top:225.4px;width:101.8px;height:14.8px;background:#fff;border:1px solid #9c9c9c"></div>
<div class="a" style="left:301.7px;top:228.20000000000002px;width:10.2px;height:9.4px;background:#4a80f4"></div>
<div class="t" style="left:313.50px;top:228.75px;font-size:8.8px;color:#111;transform:scaleX(0.86);transform-origin:0 0;">Light Blue</div>
<svg class="a" style="left:393px;top:230.4px" width="6" height="4"><path d="M0.5 0.5 L3 3 L5.5 0.5" fill="none" stroke="#333" stroke-width="0.9"/></svg>
<div class="a" style="left:406.6px;top:227.7px;width:9px;height:9px;border:1px solid #333;background:#fff"></div>
<svg class="a" style="left:406.6px;top:227.7px" width="9" height="9"><path d="M1.8 4.6 L3.8 6.6 L7.4 2.2" fill="none" stroke="#222" stroke-width="1"/></svg>
<div class="t" style="left:417.00px;top:228.85px;font-size:8.8px;color:#1a1a1a;transform:scaleX(0.87);transform-origin:0 0;">Show Slice Numbers</div>
<div class="a" style="left:667.7px;top:33px;width:48.3px;height:11.6px;background:#e1e1e1;border:1px solid #2a78d2;box-shadow:inset 0 0 0 0.6px #5a9fe6"></div>
<div class="a" style="left:667.7px;top:51px;width:48.3px;height:11.6px;background:#e1e1e1;border:1px solid #adadad"></div>
<div class="a" style="left:667.7px;top:69.2px;width:48.3px;height:11.6px;background:#e1e1e1;border:1px solid #adadad"></div>
<div class="a" style="left:667.7px;top:86.7px;width:48.3px;height:11.6px;background:#e1e1e1;border:1px solid #adadad"></div>
<div class="a" style="left:667.7px;top:33px;width:48.3px;height:80px">
</div>
<div class="t" style="left:667.7px;width:56.2px;text-align:center;top:34.95px;font-size:8.8px;color:#111;transform:scaleX(0.86);transform-origin:0 0">OK</div>
<div class="t" style="left:667.7px;width:56.2px;text-align:center;top:52.95px;font-size:8.8px;color:#111;transform:scaleX(0.86);transform-origin:0 0">Cancel</div>
<div class="t" style="left:667.7px;width:56.2px;text-align:center;top:71.15px;font-size:8.8px;color:#111;transform:scaleX(0.86);transform-origin:0 0">Prev</div>
<div class="t" style="left:667.7px;width:56.2px;text-align:center;top:88.65px;font-size:8.8px;color:#111;transform:scaleX(0.86);transform-origin:0 0">Next</div>
</div>
</body></html>
